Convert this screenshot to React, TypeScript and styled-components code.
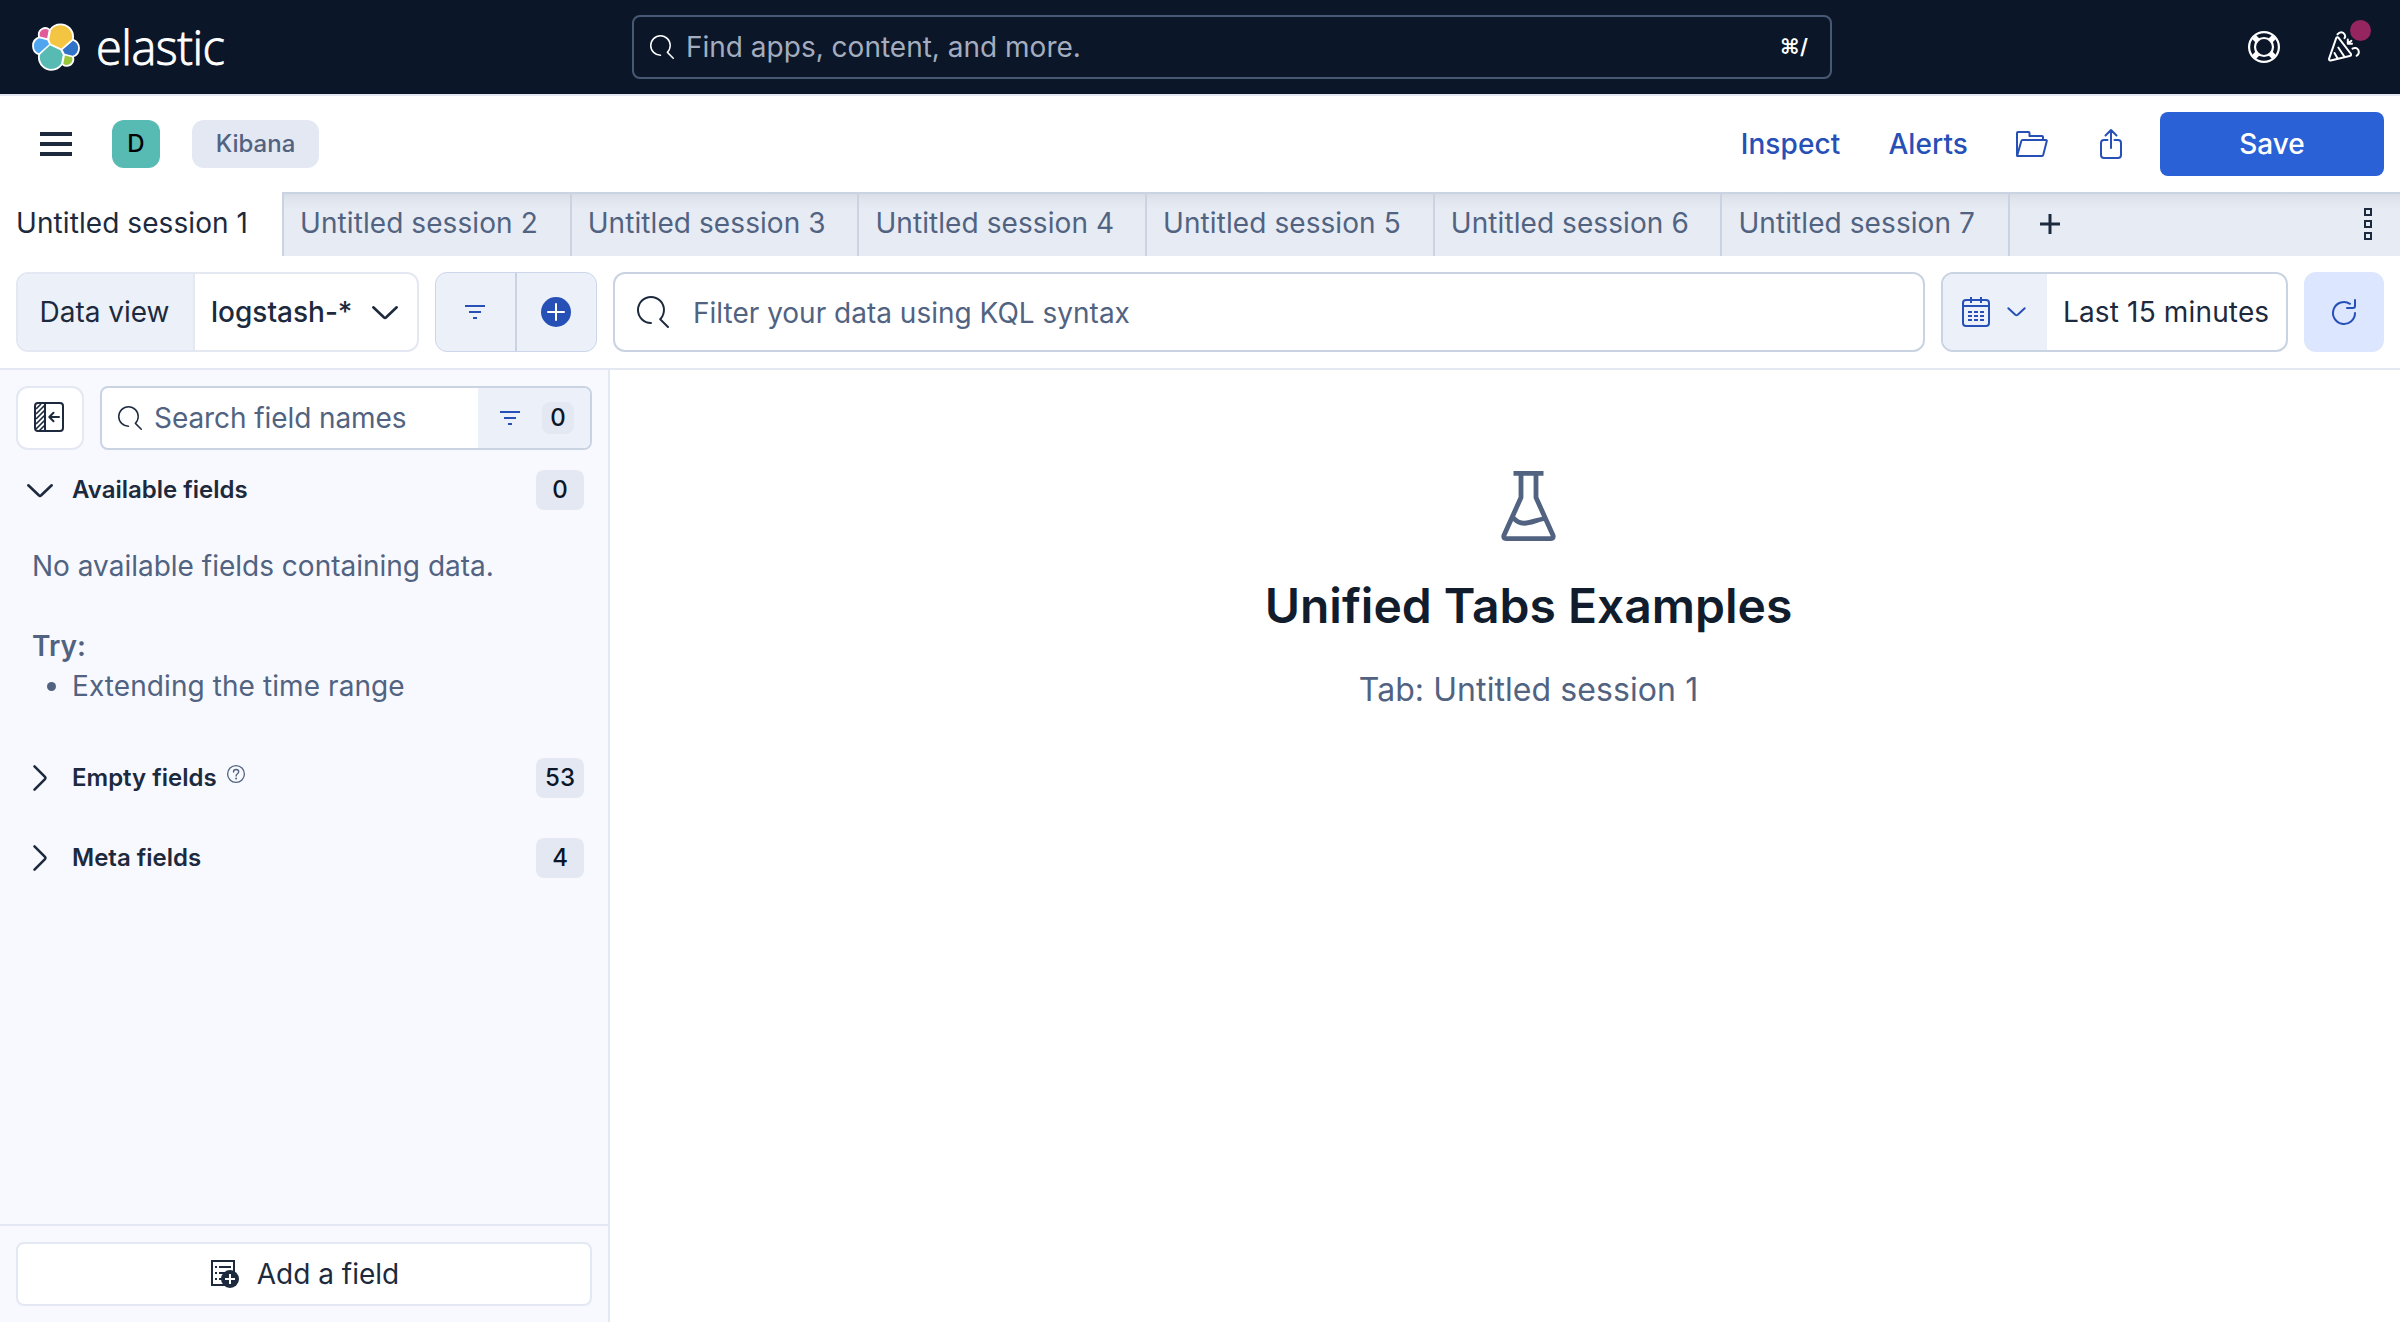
import React from 'react';
import styled, { createGlobalStyle } from 'styled-components';

const c = {
  ink: '#1d2a3e',
  subdued: '#516381',
  link: '#2750b7',
  border: '#e3e8f2',
  borderStrong: '#cad3e2',
  fill: '#ecf1f9',
  white: '#ffffff',
};

const Global = createGlobalStyle`
  * { box-sizing: border-box; }
  body { margin: 0; background: #fff; color: ${c.ink}; font-family: Inter, "Liberation Sans", sans-serif; font-size: 28px; line-height: 40px; }
  button { font: inherit; color: inherit; letter-spacing: inherit; border: 0; padding: 0; margin: 0; background: none; }
  svg { display: block; flex: none; overflow: visible; }
`;

const Page = styled.div`
  display: flex;
  flex-direction: column;
  height: 1322px;
  width: 2400px;
  overflow: hidden;
`;

/* ---------- global header ---------- */
const TopBar = styled.header`
  display: grid;
  grid-template-columns: 632px 1200px 1fr;
  align-items: center;
  height: 96px;
  background: #0b1628;
  border-bottom: 2px solid ${c.border};
`;
const Brand = styled.div`
  display: flex;
  align-items: center;
  gap: 16px;
  padding-left: 32px;
`;
const Wordmark = styled.span`
  font-family: "Open Sans", "Noto Sans", sans-serif;
  font-weight: 300;
  font-size: 47px;
  line-height: 48px;
  letter-spacing: -0.5px;
  color: #fff;
  -webkit-text-stroke: 0.9px #fff;
`;
const GlobalSearch = styled.div`
  display: flex;
  align-items: center;
  height: 64px;
  padding: 0 22px 0 16px;
  border: 2px solid #485975;
  border-radius: 8px;
  color: #a3adbf;
`;
const GlobalPlaceholder = styled.span`
  flex: 1;
  margin-left: 12px;
`;
const Shortcut = styled.span`
  color: #fff;
  font-size: 21px;
  font-weight: 600;
`;
const TopActions = styled.div`
  display: flex;
  justify-content: flex-end;
  align-items: center;
  gap: 48px;
  padding-right: 40px;
`;
const Notify = styled.div`
  position: relative;
  &::after {
    content: '';
    position: absolute;
    width: 21px;
    height: 21px;
    top: -11px;
    right: -11px;
    border-radius: 50%;
    background: #94255f;
  }
`;

/* ---------- app header ---------- */
const AppBar = styled.div`
  display: flex;
  align-items: center;
  height: 96px;
  padding: 0 16px 0 40px;
`;
const Avatar = styled.div`
  display: grid;
  place-items: center;
  width: 48px;
  height: 48px;
  margin: 0 32px 0 40px;
  border-radius: 12px;
  background: #57bab3;
  color: #000;
  font-size: 24px;
  font-weight: 500;
`;
const Crumb = styled.div`
  width: 127px;
  height: 48px;
  border-radius: 12px;
  background: ${c.border};
  color: ${c.subdued};
  text-align: center;
  font-size: 24px;
  line-height: 48px;
  font-weight: 500;
`;
const AppActions = styled.nav`
  display: flex;
  align-items: center;
  margin-left: auto;
  color: ${c.link};
  font-weight: 500;
`;
const TextAction = styled.button`
  margin-right: 48px;
  letter-spacing: 0.1px;
`;
const IconAction = styled.button<{ $after: number }>`
  margin-right: ${(p) => p.$after}px;
`;
const Save = styled.button`
  width: 224px;
  height: 64px;
  border-radius: 8px;
  background: #2b61d6;
  color: #fff;
  font-weight: 500;
`;

/* ---------- tabs ---------- */
const Tabs = styled.div`
  display: flex;
  height: 64px;
`;
const Tab = styled.div<{ $active?: boolean }>`
  flex: none;
  width: ${(p) => (p.$active ? 282 : 287.7)}px;
  padding: 0 16px;
  line-height: ${(p) => (p.$active ? 63 : 59)}px;
  letter-spacing: 0.08px;
  color: ${(p) => (p.$active ? c.ink : c.subdued)};
  border-left: ${(p) => (p.$active ? '0' : `2px solid ${c.borderStrong}`)};
  white-space: nowrap;
`;
const TabStrip = styled.div`
  display: flex;
  flex: 1;
  border-top: 2px solid ${c.borderStrong};
  background: linear-gradient(#d9dde6, #e1e5ed 6px, #e7ebf3 16px);
`;
const TabTools = styled.div`
  display: flex;
  flex: 1;
  align-items: center;
  justify-content: space-between;
  padding: 0 28px 2px 30px;
  border-left: 2px solid ${c.borderStrong};
`;

/* ---------- query bar ---------- */
const QueryBar = styled.div`
  display: flex;
  gap: 16px;
  height: 114px;
  padding: 16px 16px 0;
  border-bottom: 2px solid ${c.border};
`;
const Box = styled.div<{ $w?: number; $strong?: boolean; $inset?: number }>`
  display: flex;
  align-items: center;
  flex: ${(p) => (p.$w ? 'none' : '1')};
  width: ${(p) => (p.$w ? `${p.$w}px` : 'auto')};
  height: 80px;
  padding-left: ${(p) => p.$inset ?? 0}px;
  border: 2px solid ${(p) => (p.$strong ? c.borderStrong : c.border)};
  border-radius: 12px;
  overflow: hidden;
`;
const Prepend = styled.div<{ $w: number }>`
  display: flex;
  align-items: center;
  justify-content: center;
  gap: 17px;
  flex: none;
  width: ${(p) => p.$w}px;
  height: 100%;
  padding-right: 2px;
  background: ${c.fill};
`;
const DataViewValue = styled.div`
  display: flex;
  flex: 1;
  align-items: center;
  justify-content: space-between;
  height: 100%;
  padding: 0 19px 0 16px;
  border-left: 2px solid ${c.border};
  font-weight: 500;
`;
const FilterGroup = styled.div`
  display: grid;
  grid-template-columns: 1fr 2px 1fr;
  flex: none;
  width: 162px;
  height: 80px;
  border: 1px solid #cdd5ea;
  border-radius: 12px;
  background: ${c.fill};
`;
const Divider = styled.div`
  background: ${c.borderStrong};
`;
const Centered = styled.div`
  display: grid;
  place-items: center;
  padding: 0 2px 1px 0;
`;
const QueryText = styled.span`
  margin: 2px 0 0 24px;
  color: ${c.subdued};
`;
const DateText = styled.span`
  margin-left: 16px;
  letter-spacing: 0.15px;
  white-space: nowrap;
`;
const Refresh = styled.button`
  display: grid;
  place-items: center;
  width: 80px;
  height: 80px;
  border-radius: 12px;
  background: #dce6fe;
`;

/* ---------- body ---------- */
const Body = styled.div`
  display: flex;
  flex: 1;
  min-height: 0;
`;
const Sidebar = styled.aside`
  display: flex;
  flex-direction: column;
  flex: none;
  width: 610px;
  border-right: 2px solid ${c.border};
  background: #f7f9fe;
`;
const SideTop = styled.div`
  display: flex;
  gap: 16px;
  padding: 16px 16px 0;
`;
const Toggle = styled.button`
  display: grid;
  place-items: center;
  width: 68px;
  height: 64px;
  padding: 0 2px 2px 0;
  border: 2px solid ${c.border};
  border-radius: 12px;
  background: #fff;
`;
const FieldSearch = styled.div`
  display: flex;
  flex: 1;
  align-items: center;
  height: 64px;
  padding-left: 16px;
  border: 2px solid ${c.borderStrong};
  border-radius: 8px;
  background: #fff;
  overflow: hidden;
`;
const FieldPlaceholder = styled.span`
  flex: 1;
  margin-left: 12px;
  letter-spacing: -0.08px;
  color: ${c.subdued};
`;
const FieldFilter = styled.div`
  display: flex;
  align-items: center;
  gap: 22px;
  width: 112px;
  height: 100%;
  padding-left: 22px;
  background: ${c.fill};
`;
const SmallBadge = styled.span`
  width: 32px;
  height: 32px;
  border-radius: 8px;
  background: ${c.border};
  color: #0b1628;
  text-align: center;
  font-size: 24px;
  line-height: 32px;
  font-weight: 500;
`;
const Badge = styled.span`
  width: 48px;
  height: 40px;
  margin-left: auto;
  border-radius: 8px;
  background: ${c.border};
  color: #0b1628;
  text-align: center;
  font-size: 24px;
  line-height: 40px;
  font-weight: 500;
`;
const Group = styled.div<{ $top: number }>`
  display: flex;
  align-items: center;
  height: 40px;
  margin-top: ${(p) => p.$top}px;
  padding: 0 24px;
`;
const ChevronSlot = styled.span`
  display: grid;
  place-items: center;
  width: 32px;
  margin-right: 16px;
`;
const GroupTitle = styled.span`
  font-size: 24px;
  font-weight: 600;
`;
const HelpSlot = styled.span`
  margin: -8px 0 0 10px;
`;
const Hint = styled.div`
  margin-top: 36px;
  padding: 0 32px;
  color: ${c.subdued};
`;
const HintTry = styled.div`
  margin-top: 40px;
  font-weight: 600;
`;
const HintList = styled.ul`
  margin: 0;
  padding-left: 40px;
  letter-spacing: 0.08px;
`;
const SideFooter = styled.div`
  margin-top: auto;
  padding: 16px;
  border-top: 2px solid ${c.border};
`;
const AddField = styled.button`
  display: flex;
  align-items: center;
  justify-content: center;
  gap: 18px;
  width: 576px;
  height: 64px;
  padding-left: 2px;
  border: 2px solid ${c.border};
  border-radius: 8px;
  background: #fff;
`;
const Main = styled.main`
  display: flex;
  flex: 1;
  flex-direction: column;
  align-items: center;
  padding: 101px 0 0 47px;
`;
const Title = styled.h1`
  margin: 33px 0 0;
  color: #111c2c;
  font-size: 48px;
  line-height: 64px;
  font-weight: 600;
`;
const Subtitle = styled.p`
  margin: 28px 0 0;
  color: ${c.subdued};
  font-size: 32px;
  line-height: 48px;
  letter-spacing: 0.08px;
`;

/* ---------- icons ---------- */
const stroke = (color: string, width: number) => ({
  fill: 'none',
  stroke: color,
  strokeWidth: width,
  strokeLinecap: 'round' as const,
  strokeLinejoin: 'round' as const,
});

const logoParts: [string, string][] = [
  ['#f4c543', 'M12.58 13.787l7.002 3.211 7.066-6.213a7.849 7.849 0 00.152-1.557c0-4.287-3.477-7.776-7.75-7.776a7.735 7.735 0 00-6.384 3.376l-1.176 6.118 1.09 2.841z'],
  ['#57bab3', 'M5.333 21.228A7.959 7.959 0 005.179 22.8c0 4.3 3.487 7.797 7.773 7.797a7.763 7.763 0 006.413-3.399l1.167-6.1-1.557-2.985-7.03-3.21-6.612 6.325z'],
  ['#e05c98', 'M5.288 9.067l4.8 1.137L11.14 4.73a3.785 3.785 0 00-6.05 3.02c0 .456.067.902.198 1.316z'],
  ['#4fa6ef', 'M4.872 10.214c-2.145.711-3.6 2.772-3.6 5.038a5.307 5.307 0 003.4 4.945l6.735-6.111-1.236-2.65-5.3-1.222z'],
  ['#9ac63c', 'M20.873 27.185a3.748 3.748 0 002.285.783 3.785 3.785 0 003.59-5.102l-4.796-1.126-1.08 5.445z'],
  ['#3073c8', 'M21.848 20.563l5.28 1.238c2.146-.711 3.6-2.772 3.6-5.039a5.294 5.294 0 00-3.393-4.93l-6.904 6.08 1.417 2.65z'],
];
const ElasticLogo = () => (
  <svg width="48" height="48" viewBox="0 0 32 32">
    <g fill="#fff" stroke="#fff" strokeWidth="2.4" strokeLinejoin="round">
      {logoParts.map(([, d]) => <path key={d} d={d} />)}
    </g>
    {logoParts.map(([f, d]) => <path key={d} d={d} fill={f} />)}
  </svg>
);
const SearchIcon = ({ size, color }: { size: number; color: string }) => (
  <svg width={size} height={size} viewBox="0 0 16 16" fill={color}>
    <path d="M11.271 11.978l3.872 3.873a.502.502 0 00.708 0 .502.502 0 000-.708l-3.565-3.564c2.38-2.747 2.267-6.923-.342-9.532-2.73-2.73-7.17-2.73-9.898 0-2.728 2.729-2.728 7.17 0 9.9a6.955 6.955 0 004.949 2.05.5.5 0 000-1 5.96 5.96 0 01-4.242-1.757 6.01 6.01 0 010-8.486 6.004 6.004 0 018.484 0 6.01 6.01 0 010 8.486.5.5 0 000 .707z" />
  </svg>
);
const LifeRing = () => (
  <svg width="32" height="32" viewBox="0 0 32 32">
    <g {...stroke('#fff', 2.2)}>
      <circle cx="16" cy="16" r="14.9" />
      <circle cx="16" cy="16" r="9" />
    </g>
    <g stroke="#fff" strokeWidth="5.4">
      <path d="M6 6l4 4M26 6l-4 4M6 26l4-4M26 26l-4-4" />
    </g>
  </svg>
);
const Cheer = () => (
  <svg width="32" height="32" viewBox="0 0 32 32">
    <g {...stroke('#fff', 2)}>
      <path d="M8.2 7.2L1.1 27.6c-.4 1.2.4 2 1.6 1.8l19-4.3c1.4-.3 1.8-1.5.9-2.6L10.4 6.7c-.7-.9-1.8-.6-2.2.5z" />
      <path d="M6.5 22l3 5.2M10.3 16.5l6 9" />
      <path d="M9.5 3.4c2-2.8 5.6-2.8 7.200 0 .7 1.4.6 2.8-.2 3.800M19.800 8.600v4.200h4.200M20 12.600l3.400-2.800M24.500 17.600c2.200-1.200 4.800-.7 5.900 1.500.9 2 .2 4.200-1.800 5.700" />
    </g>
  </svg>
);
const Burger = () => (
  <svg width="32" height="24" viewBox="0 0 32 24" fill={c.ink}>
    <path d="M0 0h32v4H0zM0 10h32v4H0zM0 20h32v4H0z" />
  </svg>
);
const FolderOpen = () => (
  <svg width="32" height="26" viewBox="0 0 32 26">
    <path d="M1 24.500V2q0-1 1-1h10.500q1 0 1 1v3h12.500q1 0 1 1v2.500M1 24.500q0 .5.600.500H26q1 0 1.200-.900L30.800 10q.2-1-.8-1H6.500q-1 0-1.200.9L1.200 24.500" {...stroke(c.link, 2)} />
  </svg>
);
const ShareUp = () => (
  <svg width="22" height="30" viewBox="0 0 22 30">
    <path d="M7.500 11H4q-3 0-3 3v12q0 3 3 3h14q3 0 3-3V14q0-3-3-3h-3.500M11 19V1M5.500 6.500L11 1l5.500 5.500" {...stroke(c.link, 2)} />
  </svg>
);
const Plus = () => (
  <svg width="20" height="20" viewBox="0 0 20 20" fill={c.ink}>
    <path d="M8.500 0h3v8.500H20v3h-8.500V20h-3v-8.500H0v-3h8.500z" />
  </svg>
);
const Boxes = () => (
  <svg width="8" height="32" viewBox="0 0 8 32" fill="none" stroke={c.ink} strokeWidth="2">
    <path d="M1 1h6v6H1zM1 13h6v6H1zM1 25h6v6H1z" />
  </svg>
);
const ChevronDown = ({ w = 26, color = c.ink, sw = 2.6 }: { w?: number; color?: string; sw?: number }) => (
  <svg width={w} height={w / 2} viewBox={`0 0 ${w} ${w / 2}`}>
    <path d={`M1.300 1.300L${w / 2 - 1.200} ${w / 2 - 1.700}q1.200 1 2.400 0L${w - 1.300} 1.300`} {...stroke(color, sw)} />
  </svg>
);
const ChevronRight = () => (
  <svg width="14" height="26" viewBox="0 0 14 26">
    <path d="M1.500 1.300L12 11.800q1 1.200 0 2.400L1.500 24.700" {...stroke(c.ink, 2.6)} />
  </svg>
);
const FilterIcon = () => (
  <svg width="20" height="14" viewBox="0 0 20 14" fill={c.link}>
    <path d="M0 0h20v2H0zM4 6h12v2H4zM8 12h4v2H8z" />
  </svg>
);
const PlusCircle = () => (
  <svg width="30" height="30" viewBox="0 0 30 30">
    <circle cx="15" cy="15" r="15" fill={c.link} />
    <path d="M15 7v16M7 15h16" {...stroke('#fff', 2)} />
  </svg>
);
const Calendar = () => (
  <svg width="28" height="30" viewBox="0 0 28 30">
    <path d="M4 3h20q3 0 3 3v20q0 3-3 3H4q-3 0-3-3V6q0-3 3-3zM1 9h26M9 0v6M19 0v6" {...stroke(c.link, 2)} strokeLinecap="butt" />
    <path d="M6 15h4M12 15h4M18 15h4M6 19h4M12 19h4M18 19h4M6 23h4M12 23h4M18 23h4" stroke={c.link} strokeWidth="2" />
  </svg>
);
const RefreshIcon = () => (
  <svg width="24" height="26" viewBox="0 0 24 26">
    <path d="M18 4.800A11 11 0 1 0 23 14M23 1v6q0 2-2 2h-6" {...stroke(c.link, 2)} />
  </svg>
);
const MenuLeft = () => (
  <svg width="30" height="30" viewBox="0 0 30 30">
    <rect x="1" y="1" width="28" height="28" rx="3" {...stroke(c.ink, 2)} />
    <path d="M11 1v28" {...stroke(c.ink, 2)} />
    <path d="M2 7l5-5M2 12l9-9M2 17l9-9M2 22l9-9M2 27l9-9M5 29l6-6" stroke={c.ink} strokeWidth="1.6" />
    <path d="M25 15H15.500M19.500 10.800L15.300 15l4.200 4.200" {...stroke(c.ink, 2)} />
  </svg>
);
const Question = () => (
  <svg width="18" height="18" viewBox="0 0 18 18">
    <circle cx="9" cy="9" r="8.400" {...stroke(c.subdued, 1.3)} />
    <path d="M6.500 7c0-3.400 5.200-3.200 5.200-.2 0 2-2.600 1.900-2.600 4.200" {...stroke(c.subdued, 1.4)} />
    <circle cx="9.100" cy="13.500" r="1" fill={c.subdued} />
  </svg>
);
const AddFieldIcon = () => (
  <svg width="28" height="28" viewBox="0 0 28 28">
    <path d="M1 1h22v24H1z" fill="none" stroke={c.ink} strokeWidth="2" />
    <path d="M4 7h2M8 7h12M4 13h2M8 13h12M4 19h2M8 19h6" stroke={c.ink} strokeWidth="2" />
    <circle cx="19" cy="19" r="9" fill={c.ink} />
    <path d="M19 14v10M14 19h10" stroke="#fff" strokeWidth="2" />
  </svg>
);
const Beaker = () => (
  <svg width="55" height="70" viewBox="0 0 55 70" fill="none" stroke={c.subdued} strokeWidth="4.800">
    <path d="M12.500 2.400h30M20 3v23.500L2.900 64.500Q2.200 67.600 5 67.600h45Q52.800 67.600 52.100 64.500L35 26.500V3" strokeLinejoin="round" />
    <path d="M12 46.500c4.500 5.500 9 6.800 15.500 5.200 6-1.300 10-3.200 16.500-4.200" />
  </svg>
);

const inactiveTabs = [2, 3, 4, 5, 6, 7];

export default function App() {
  return (
    <Page>
      <Global />
      <TopBar>
        <Brand>
          <ElasticLogo />
          <Wordmark>elastic</Wordmark>
        </Brand>
        <GlobalSearch>
          <SearchIcon size={24} color="#fff" />
          <GlobalPlaceholder>Find apps, content, and more.</GlobalPlaceholder>
          <Shortcut>⌘/</Shortcut>
        </GlobalSearch>
        <TopActions>
          <LifeRing />
          <Notify><Cheer /></Notify>
        </TopActions>
      </TopBar>

      <AppBar>
        <Burger />
        <Avatar>D</Avatar>
        <Crumb>Kibana</Crumb>
        <AppActions>
          <TextAction>Inspect</TextAction>
          <TextAction>Alerts</TextAction>
          <IconAction $after={52}><FolderOpen /></IconAction>
          <IconAction $after={38}><ShareUp /></IconAction>
          <Save>Save</Save>
        </AppActions>
      </AppBar>

      <Tabs>
        <Tab $active>Untitled session 1</Tab>
        <TabStrip>
          {inactiveTabs.map((n) => <Tab key={n}>Untitled session {n}</Tab>)}
          <TabTools><Plus /><Boxes /></TabTools>
        </TabStrip>
      </Tabs>

      <QueryBar>
        <Box $w={403}>
          <Prepend $w={175}>Data view</Prepend>
          <DataViewValue>logstash-*<ChevronDown /></DataViewValue>
        </Box>
        <FilterGroup>
          <Centered><FilterIcon /></Centered>
          <Divider />
          <Centered><PlusCircle /></Centered>
        </FilterGroup>
        <Box $strong $inset={22}>
          <SearchIcon size={32} color={c.ink} />
          <QueryText>Filter your data using KQL syntax</QueryText>
        </Box>
        <Box $w={347} $strong>
          <Prepend $w={104}><Calendar /><ChevronDown w={19} color={c.link} sw={2} /></Prepend>
          <DateText>Last 15 minutes</DateText>
        </Box>
        <Refresh><RefreshIcon /></Refresh>
      </QueryBar>

      <Body>
        <Sidebar>
          <SideTop>
            <Toggle><MenuLeft /></Toggle>
            <FieldSearch>
              <SearchIcon size={24} color={c.ink} />
              <FieldPlaceholder>Search field names</FieldPlaceholder>
              <FieldFilter><FilterIcon /><SmallBadge>0</SmallBadge></FieldFilter>
            </FieldSearch>
          </SideTop>
          <Group $top={20}>
            <ChevronSlot><ChevronDown /></ChevronSlot>
            <GroupTitle>Available fields</GroupTitle>
            <Badge>0</Badge>
          </Group>
          <Hint>
            No available fields containing data.
            <HintTry>Try:</HintTry>
            <HintList><li>Extending the time range</li></HintList>
          </Hint>
          <Group $top={52}>
            <ChevronSlot><ChevronRight /></ChevronSlot>
            <GroupTitle>Empty fields</GroupTitle>
            <HelpSlot><Question /></HelpSlot>
            <Badge>53</Badge>
          </Group>
          <Group $top={40}>
            <ChevronSlot><ChevronRight /></ChevronSlot>
            <GroupTitle>Meta fields</GroupTitle>
            <Badge>4</Badge>
          </Group>
          <SideFooter>
            <AddField><AddFieldIcon />Add a field</AddField>
          </SideFooter>
        </Sidebar>
        <Main>
          <Beaker />
          <Title>Unified Tabs Examples</Title>
          <Subtitle>Tab: Untitled session 1</Subtitle>
        </Main>
      </Body>
    </Page>
  );
}
